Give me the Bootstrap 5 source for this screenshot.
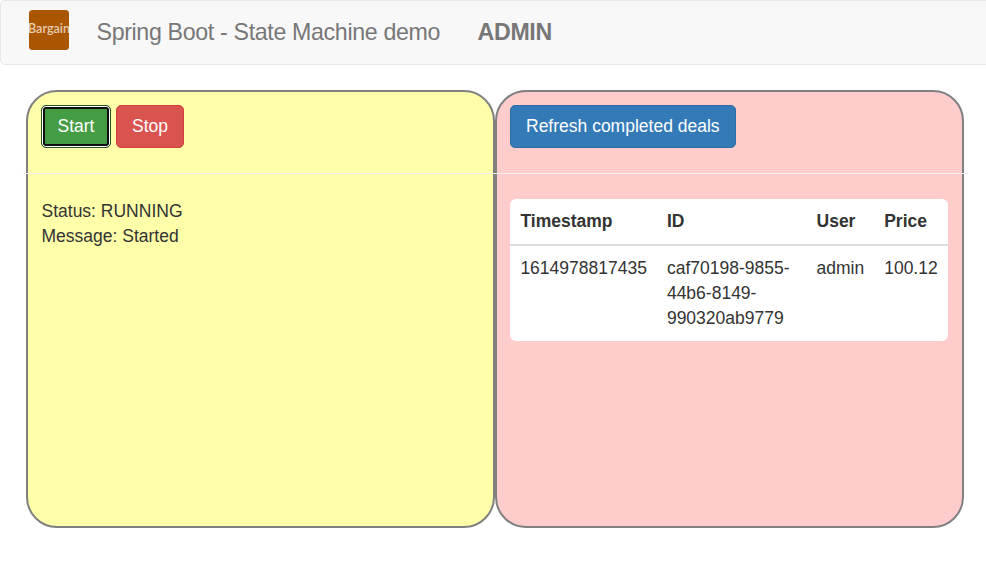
<!DOCTYPE html>
<html lang="en">
<head>
<meta charset="utf-8">
<meta name="viewport" content="width=device-width, initial-scale=1">
<title>Spring Boot - State Machine demo</title>
<link href="https://cdn.jsdelivr.net/npm/bootstrap@5.3.0/dist/css/bootstrap.min.css" rel="stylesheet">
<style>
body{font:17.5px/25px "Liberation Sans",Arial,sans-serif;color:#333;background:#fff;overflow:hidden}
.topbar{height:65px;background:#f8f8f8;border:1px solid #e7e7e7;border-radius:5px;margin-right:-6px;padding:0 0 5px 28px}
.logo{width:40px;height:40px;flex:none;margin-bottom:1px}
.topbar .navbar-brand{font-size:23.2px;letter-spacing:-.34px;line-height:25px;color:#777;padding:5px 0 0;margin:0 0 0 27.5px}
.topbar .admin-label{margin-left:37.5px}
.panels{padding:25px 22px 0 26px}
.panel-box{height:438px;border:2px solid #808080;border-radius:31px;padding:13px}
.panel-run{background:#ffa}
.panel-deals{background:#fcc}
.panel-box .btn{font-size:17.5px;line-height:25px;padding:8px 15px;border-radius:5px;height:43px}
.panel-box .btn-run{width:70px;margin-right:5px;color:#fff;background:#449d44;border-color:#255625;box-shadow:inset 0 0 0 1px #fff,inset 0 0 0 3px #101010}
.btn-halt{color:#fff;background:#d9534f;border-color:#d43f3a}
.btn-deals{color:#fff;background:#337ab7;border-color:#2e6da4}
.rule{height:1px;border:0;background:#eee;opacity:1;margin:25px -19px 25px -18px}
.status-text{padding-left:.5px}
.deals{background:#fff;border-radius:6px;width:438px}
.deals .table{--bs-table-bg:transparent;color:#333}
.deals th,.deals td{padding:10px 9.6px 10px 10.4px;border:0;line-height:25px;vertical-align:top;color:#333}
.deals th:nth-child(n+3),.deals td:nth-child(n+3){padding-left:9.7px;padding-right:10.3px}
.deals th{border-bottom:2px solid #ddd}
</style>
<script src="https://cdn.jsdelivr.net/npm/bootstrap@5.3.0/dist/js/bootstrap.bundle.min.js"></script>
</head>
<body>
<nav class="topbar d-flex align-items-center">
  <svg class="logo" viewBox="0 0 40 40" role="img" aria-label="Bargain">
    <rect width="40" height="40" rx="3.5" fill="#a50"/>
    <text x="-1" y="23" textLength="42" lengthAdjust="spacingAndGlyphs" font-family="Lato, sans-serif" font-size="12.5" font-weight="600" fill="#e6cdb4">Bargain</text>
  </svg>
  <span class="navbar-brand">Spring Boot - State Machine demo</span>
  <span class="navbar-brand admin-label fw-bold">ADMIN</span>
</nav>
<main class="panels">
  <div class="row g-0">
    <section class="col-6 panel-box panel-run">
      <div class="d-flex">
        <button class="btn btn-run" type="button">Start</button>
        <button class="btn btn-halt" type="button">Stop</button>
      </div>
      <hr class="rule">
      <div class="status-text">Status: RUNNING</div>
      <div class="status-text">Message: Started</div>
    </section>
    <section class="col-6 panel-box panel-deals">
      <div class="d-flex">
        <button class="btn btn-deals" type="button">Refresh completed deals</button>
      </div>
      <hr class="rule">
      <div class="deals">
        <table class="table mb-0">
          <thead><tr><th>Timestamp</th><th>ID</th><th>User</th><th>Price</th></tr></thead>
          <tbody><tr><td>1614978817435</td><td>caf70198-9855-44b6-8149-990320ab9779</td><td>admin</td><td>100.12</td></tr></tbody>
        </table>
      </div>
    </section>
  </div>
</main>
</body>
</html>
